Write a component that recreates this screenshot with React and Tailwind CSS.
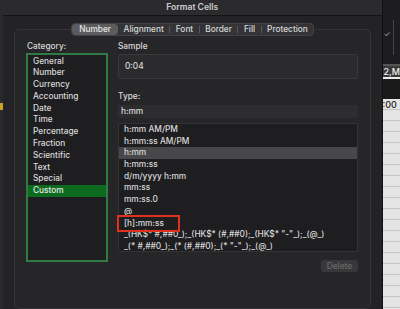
import React from "react";

const categories = [
  "General",
  "Number",
  "Currency",
  "Accounting",
  "Date",
  "Time",
  "Percentage",
  "Fraction",
  "Scientific",
  "Text",
  "Special",
  "Custom",
];

const types = [
  "h:mm AM/PM",
  "h:mm:ss AM/PM",
  "h:mm",
  "h:mm:ss",
  "d/m/yyyy h:mm",
  "mm:ss",
  "mm:ss.0",
  "@",
  "[h]:mm:ss",
  '_(HK$* #,##0_);_(HK$* (#,##0);_(HK$* "-"_);_(@_)',
  '_(* #,##0_);_(* (#,##0);_(* "-"_);_(@_)',
];

const tabs = ["Number", "Alignment", "Font", "Border", "Fill", "Protection"];

const App = () => {
  return (
    <div
      className="flex w-[400px] h-[309px] overflow-hidden bg-[#1c1c1e] text-[8.3px] font-medium text-[#d9d9d9]"
      style={{ fontFamily: "Inter, 'Noto Sans', sans-serif" }}
    >
      {/* sheet behind, left */}
      <div className="flex flex-col w-[3px] bg-[#2a2a2a]">
        <div className="h-[103px]" />
        <div className="h-[7px] bg-[#c9a227]" />
      </div>

      {/* dialog */}
      <div className="flex flex-col w-[382px] h-full bg-[#232325] border-r border-[#111]">
        {/* title bar */}
        <div className="flex items-center justify-center h-[16px] bg-[#2b2b2d] border-b border-[#141416] font-semibold text-[8.6px] text-[#cfcfcf]">
          Format Cells
        </div>

        <div className="flex flex-col flex-1 pt-[7px] pl-[11px] pr-[11px]">
          {/* tabs */}
          <div className="relative z-10 flex self-center h-[13px] ml-[1px] rounded-[4px] bg-[#343437] border border-[#414144] items-center">
            {tabs.map((t, i) => (
              <div key={t} className="flex items-center h-full">
                {i > 1 && <div className="w-px h-[7px] bg-[#58585b]" />}
                <div
                  className={
                    i === 0
                      ? "flex items-center h-full px-[7px] rounded-[4px] bg-[#5c5c5f] text-[#e6e6e6]"
                      : "flex items-center h-full px-[5.5px] text-[#d8d8d8]"
                  }
                >
                  {t}
                </div>
              </div>
            ))}
          </div>

          {/* group box */}
          <div className="flex flex-1 gap-[10px] -mt-[7px] pt-[10px] pl-[11px] bg-[#262628] border border-[#353538] rounded-[5px]">
            {/* category */}
            <div className="flex flex-col w-[82px]">
              <div className="h-[12px] leading-[12px] pl-[1px]">Category:</div>
              <div className="mt-[1px] h-[209px] pt-[0.5px] bg-[#1e1e20] border-2 border-[#2f7a45]">
                {categories.map((c) => (
                  <div
                    key={c}
                    className={
                      c === "Custom"
                        ? "h-[11.8px] leading-[11.8px] pl-[5px] bg-[#0d6b1f] text-[#e8e8e8]"
                        : "h-[11.8px] leading-[11.8px] pl-[5px]"
                    }
                  >
                    {c}
                  </div>
                ))}
              </div>
            </div>

            {/* right side */}
            <div className="flex flex-col w-[240px]">
              <div className="h-[12px] leading-[12px]">Sample</div>
              <div className="flex items-center mt-[2px] h-[25px] pl-[6px] bg-[#2b2b2d] border border-[#38383b] rounded-[3px]">
                0:04
              </div>
              <div className="mt-[11px] h-[12px] leading-[12px]">Type:</div>
              <div className="flex items-center mt-[3px] h-[13px] pl-[3px] bg-[#2d2d2f]">h:mm</div>
              <div className="relative mt-[5px] h-[129px] bg-[#1e1e20] border border-[#333336]">
                <div className="h-full overflow-hidden">
                  {types.map((t) => (
                    <div
                      key={t}
                      className={
                        t === "h:mm"
                          ? "h-[11.7px] leading-[11.7px] pl-[5px] whitespace-nowrap bg-[#48484a]"
                          : "h-[11.7px] leading-[11.7px] pl-[5px] whitespace-nowrap"
                      }
                    >
                      {t}
                    </div>
                  ))}
                </div>
                {/* annotation */}
                <div className="absolute left-[-2px] top-[91px] w-[63px] h-[17px] border-2 border-[#e0301e]" />
              </div>
              <div className="flex justify-end mt-[8px]">
                <div className="flex items-center justify-center w-[37px] h-[12px] rounded-[3px] bg-[#38383a] text-[#6b6b6d]">
                  Delete
                </div>
              </div>
            </div>
          </div>
        </div>
      </div>

      {/* sheet behind, right */}
      <div className="flex flex-col flex-1 text-[9px]">
        <div className="relative h-[64px] bg-[#1d1d1f]">
          <div className="absolute left-[1px] top-[28px] text-[#888] text-[8px]">✓</div>
          <div className="absolute left-[10px] top-[20px] w-px h-[35px] bg-[#444]" />
        </div>
        <div className="h-[2px] bg-[#555]" />
        <div className="h-[11px] leading-[11px] bg-[#3a3a3c] text-[#eee] whitespace-nowrap pl-[1px]">2,M</div>
        <div className="h-[2px] bg-[#eaeaea]" />
        <div className="h-[20px] bg-[#1a1a1a]" />
        <div className="flex flex-col flex-1 bg-[#e4e4e4]">
          {Array.from({ length: 19 }).map((_, i) => (
            <div
              key={i}
              className="h-[11px] leading-[11px] border-b border-[#c4c4c4] text-[#222] whitespace-nowrap"
            >
              {i === 0 ? ":00" : ""}
            </div>
          ))}
        </div>
      </div>
    </div>
  );
};

export default App;
